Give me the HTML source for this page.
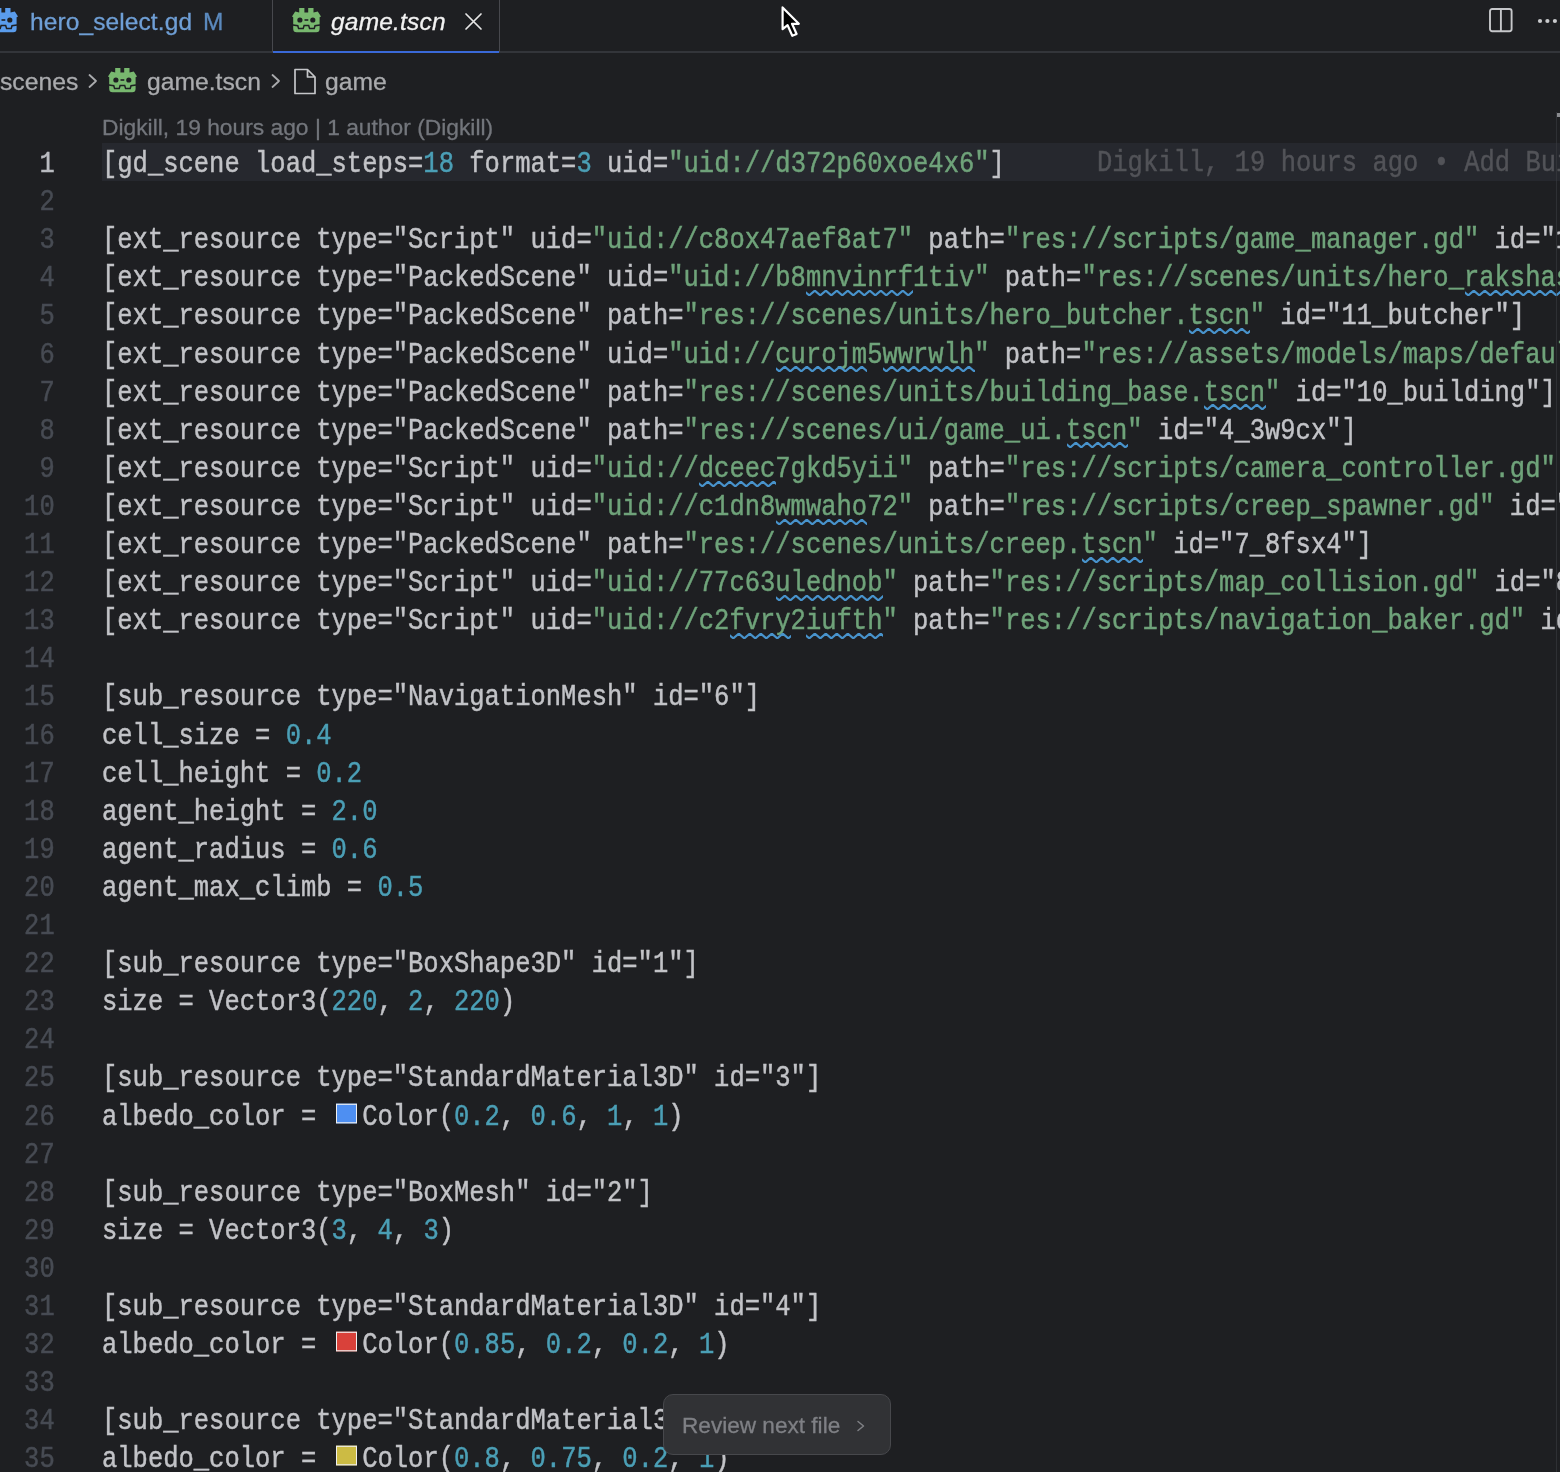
<!DOCTYPE html>
<html><head><meta charset="utf-8"><style>
*{margin:0;padding:0;box-sizing:border-box}
html,body{width:1560px;height:1472px;overflow:hidden;background:#1e1f22}
body{position:relative;font-family:"Liberation Sans",sans-serif}
.abs{position:absolute}
svg{display:block}
#tabs{position:absolute;left:0;top:50.8px;width:1560px;height:2px;background:#33353a}
.ui{position:absolute;white-space:pre;font-family:"Liberation Sans",sans-serif;line-height:1;will-change:transform;-webkit-text-stroke:0.3px currentColor}
.ln{position:absolute;left:0;width:54.70px;text-align:right;height:38.1px;line-height:38.1px;font-family:"Liberation Mono",monospace;font-size:25.518px;letter-spacing:0.000px;color:#474b53;transform:translateY(2.6px) scaleY(1.16);-webkit-text-stroke:0.4px currentColor;will-change:transform}
.ln.cur{color:#b9bbc0}
.code{position:absolute;left:101.5px;height:38.1px;line-height:38.1px;white-space:pre;font-family:"Liberation Mono",monospace;font-size:25.518px;letter-spacing:0.000px;color:#c2c3c7;transform:translateY(2.6px) scaleY(1.16);-webkit-text-stroke:0.4px currentColor;will-change:transform}
.code .s{color:#6fa37a}
.code .n{color:#4b9fb6}
.sw{display:inline-block;width:30.63px;height:10px;position:relative;vertical-align:baseline}
.sw b{position:absolute;left:4.7px;top:-8.0px;width:21px;height:17.4px;border:1.7px solid #f0f0f0}
.sq{position:absolute;overflow:hidden}
#clip{position:absolute;left:0;top:0;width:1560px;height:1472px;overflow:hidden}
</style></head><body>
<div id="tabs"></div>
<div class="abs" style="left:-11px;top:8px"><svg width="29" height="25" viewBox="0 0 29 25"><path fill="#5a9cec" d="M7.2 0 H12.4 V4.4 H16.2 V0 H21.5 V4.4 L25.8 3.5 L29 8.6 L27.6 9.3 V20.8 Q27.6 24.3 24.3 24.3 H4.5 Q1.2 24.3 1.2 20.8 V9.3 L0 8.6 L3.2 3.5 L7.2 4.4 Z"/>
<path d="M0.8 16.9 L5.8 17.7 L6.6 20.6 L11.2 20.6 L12.1 17.5 L16.7 17.5 L17.6 20.6 L22.2 20.6 L23 17.7 L28 16.9" fill="none" stroke="#1e1f22" stroke-width="1.5" stroke-linejoin="miter"/>
<g fill="#1e1f22"><circle cx="7.9" cy="12" r="2.6"/><circle cx="20.8" cy="12" r="2.6"/><rect x="12.5" y="11.2" width="3.8" height="1.6"/></g></svg></div>
<div class="ui" style="left:29.5px;top:10px;font-size:24.5px;letter-spacing:0.1px;color:#6f9fd6">hero_select.gd</div>
<div class="ui" style="left:202.5px;top:10px;font-size:24.5px;color:#5b89bd">M</div>
<div class="abs" style="left:272px;top:0;width:1px;height:52px;background:#47484d"></div>
<div class="abs" style="left:499px;top:0;width:1px;height:52px;background:#47484d"></div>
<div class="abs" style="left:273px;top:50.5px;width:226px;height:2.2px;background:#3a69d8"></div>
<div class="abs" style="left:291.6px;top:8px"><svg width="29" height="25" viewBox="0 0 29 25"><path fill="#78b86f" d="M7.2 0 H12.4 V4.4 H16.2 V0 H21.5 V4.4 L25.8 3.5 L29 8.6 L27.6 9.3 V20.8 Q27.6 24.3 24.3 24.3 H4.5 Q1.2 24.3 1.2 20.8 V9.3 L0 8.6 L3.2 3.5 L7.2 4.4 Z"/>
<path d="M0.8 16.9 L5.8 17.7 L6.6 20.6 L11.2 20.6 L12.1 17.5 L16.7 17.5 L17.6 20.6 L22.2 20.6 L23 17.7 L28 16.9" fill="none" stroke="#1e1f22" stroke-width="1.5" stroke-linejoin="miter"/>
<g fill="#1e1f22"><circle cx="7.9" cy="12" r="2.6"/><circle cx="20.8" cy="12" r="2.6"/><rect x="12.5" y="11.2" width="3.8" height="1.6"/></g></svg></div>
<div class="ui" style="left:331px;top:10px;font-size:24.5px;letter-spacing:0.2px;font-style:italic;color:#f2f2f2">game.tscn</div>
<svg class="abs" style="left:462.5px;top:10.5px" width="21" height="21" viewBox="0 0 21 21"><path d="M3 3 L18 18 M18 3 L3 18" stroke="#e6e6e6" stroke-width="1.7" stroke-linecap="round"/></svg>
<div class="abs" style="left:1489.2px;top:7.9px"><svg width="26" height="26" viewBox="0 0 26 26"><rect x="1" y="1" width="21.6" height="22.2" rx="2.2" fill="none" stroke="#c6c7ca" stroke-width="1.9"/><line x1="11.9" y1="1" x2="11.9" y2="23.2" stroke="#c6c7ca" stroke-width="1.9"/></svg></div>
<svg class="abs" style="left:1535px;top:16px" width="25" height="10" viewBox="0 0 25 10"><circle cx="5" cy="5" r="2.1" fill="#c9cacd"/><circle cx="12.4" cy="5" r="2.1" fill="#c9cacd"/><circle cx="19.9" cy="5" r="2.1" fill="#c9cacd"/></svg>
<div class="abs" style="left:776px;top:3px"><svg width="30" height="40" viewBox="0 0 30 40"><path d="M6.6 4.4 L6.6 26.2 L11.6 22.2 L16.3 32.8 L20.6 31 L16 20.8 L22.8 20.8 Z" fill="#000" stroke="#fff" stroke-width="2.2" stroke-linejoin="round"/></svg></div>

<div class="ui" style="left:0px;top:70.3px;font-size:24.7px;transform:scaleY(1.0);transform-origin:0 80%;color:#aaabae">scenes</div>
<div class="abs" style="left:87px;top:73px"><svg width="12" height="16" viewBox="0 0 12 16"><path d="M2.5 2 L9 8 L2.5 14" fill="none" stroke="#aaabae" stroke-width="1.8" stroke-linecap="round" stroke-linejoin="round"/></svg></div>
<div class="abs" style="left:107.7px;top:68px"><svg width="29" height="25" viewBox="0 0 29 25"><path fill="#78b86f" d="M7.2 0 H12.4 V4.4 H16.2 V0 H21.5 V4.4 L25.8 3.5 L29 8.6 L27.6 9.3 V20.8 Q27.6 24.3 24.3 24.3 H4.5 Q1.2 24.3 1.2 20.8 V9.3 L0 8.6 L3.2 3.5 L7.2 4.4 Z"/>
<path d="M0.8 16.9 L5.8 17.7 L6.6 20.6 L11.2 20.6 L12.1 17.5 L16.7 17.5 L17.6 20.6 L22.2 20.6 L23 17.7 L28 16.9" fill="none" stroke="#1e1f22" stroke-width="1.5" stroke-linejoin="miter"/>
<g fill="#1e1f22"><circle cx="7.9" cy="12" r="2.6"/><circle cx="20.8" cy="12" r="2.6"/><rect x="12.5" y="11.2" width="3.8" height="1.6"/></g></svg></div>
<div class="ui" style="left:147px;top:70.3px;font-size:24.7px;transform:scaleY(1.0);transform-origin:0 80%;color:#aaabae">game.tscn</div>
<div class="abs" style="left:270px;top:73px"><svg width="12" height="16" viewBox="0 0 12 16"><path d="M2.5 2 L9 8 L2.5 14" fill="none" stroke="#aaabae" stroke-width="1.8" stroke-linecap="round" stroke-linejoin="round"/></svg></div>
<div class="abs" style="left:292.5px;top:67.5px"><svg width="24" height="27" viewBox="0 0 24 27"><path d="M2 1.5 H14.5 L22 9 V25.5 H2 Z M14.5 1.5 V9 H22" fill="none" stroke="#c5c6c9" stroke-width="1.7" stroke-linejoin="round"/></svg></div>
<div class="ui" style="left:325px;top:70.3px;font-size:24.7px;transform:scaleY(1.0);transform-origin:0 80%;color:#aaabae">game</div>

<div class="ui" style="left:101.6px;top:116.2px;font-size:22.8px;color:#73767c">Digkill, 19 hours ago | 1 author (Digkill)</div>

<div class="abs" style="left:102px;top:143.0px;width:1460px;height:38.1px;background:#26282e"></div>
<div id="clip">
<div class="ln cur" style="top:143.00px">1</div>
<div class="code" style="top:143.00px">[gd_scene load_steps=<span class="n">18</span> format=<span class="n">3</span> uid=<span class="s">&quot;uid://d372p60xoe4x6&quot;</span>]</div>
<div class="ln" style="top:181.10px">2</div>
<div class="ln" style="top:219.20px">3</div>
<div class="code" style="top:219.20px">[ext_resource type=&quot;Script&quot; uid=<span class="s">&quot;uid://c8ox47aef8at7&quot;</span> path=<span class="s">&quot;res://scripts/game_manager.gd&quot;</span> id=&quot;1_abcde&quot;]</div>
<div class="ln" style="top:257.30px">4</div>
<div class="code" style="top:257.30px">[ext_resource type=&quot;PackedScene&quot; uid=<span class="s">&quot;uid://b8mnvinrf1tiv&quot;</span> path=<span class="s">&quot;res://scenes/units/hero_rakshasa.tscn&quot;</span> id=&quot;2_x&quot;]</div>
<svg class="sq" style="top:290.00px;left:806.20px" width="107.2" height="6" viewBox="0 0 107.2 6"><polyline points="-2.20,0.60 3.30,5.40 8.80,0.60 14.30,5.40 19.80,0.60 25.30,5.40 30.80,0.60 36.30,5.40 41.80,0.60 47.30,5.40 52.80,0.60 58.30,5.40 63.80,0.60 69.30,5.40 74.80,0.60 80.30,5.40 85.80,0.60 91.30,5.40 96.80,0.60 102.30,5.40 107.80,0.60 113.30,5.40" fill="none" stroke="#4893cc" stroke-width="2.1" stroke-linejoin="round" stroke-linecap="round"/></svg>
<svg class="sq" style="top:290.00px;left:1464.66px" width="122.5" height="6" viewBox="0 0 122.5 6"><polyline points="-2.20,0.60 3.30,5.40 8.80,0.60 14.30,5.40 19.80,0.60 25.30,5.40 30.80,0.60 36.30,5.40 41.80,0.60 47.30,5.40 52.80,0.60 58.30,5.40 63.80,0.60 69.30,5.40 74.80,0.60 80.30,5.40 85.80,0.60 91.30,5.40 96.80,0.60 102.30,5.40 107.80,0.60 113.30,5.40 118.80,0.60 124.30,5.40 129.80,0.60" fill="none" stroke="#4893cc" stroke-width="2.1" stroke-linejoin="round" stroke-linecap="round"/></svg>
<div class="ln" style="top:295.40px">5</div>
<div class="code" style="top:295.40px">[ext_resource type=&quot;PackedScene&quot; path=<span class="s">&quot;res://scenes/units/hero_butcher.tscn&quot;</span> id=&quot;11_butcher&quot;]</div>
<svg class="sq" style="top:328.10px;left:1189.02px" width="61.3" height="6" viewBox="0 0 61.3 6"><polyline points="-2.20,0.60 3.30,5.40 8.80,0.60 14.30,5.40 19.80,0.60 25.30,5.40 30.80,0.60 36.30,5.40 41.80,0.60 47.30,5.40 52.80,0.60 58.30,5.40 63.80,0.60 69.30,5.40" fill="none" stroke="#4893cc" stroke-width="2.1" stroke-linejoin="round" stroke-linecap="round"/></svg>
<div class="ln" style="top:333.50px">6</div>
<div class="code" style="top:333.50px">[ext_resource type=&quot;PackedScene&quot; uid=<span class="s">&quot;uid://curojm5wwrwlh&quot;</span> path=<span class="s">&quot;res://assets/models/maps/default.glb&quot;</span> id=&quot;3_x&quot;]</div>
<svg class="sq" style="top:366.20px;left:775.57px" width="91.9" height="6" viewBox="0 0 91.9 6"><polyline points="-2.20,0.60 3.30,5.40 8.80,0.60 14.30,5.40 19.80,0.60 25.30,5.40 30.80,0.60 36.30,5.40 41.80,0.60 47.30,5.40 52.80,0.60 58.30,5.40 63.80,0.60 69.30,5.40 74.80,0.60 80.30,5.40 85.80,0.60 91.30,5.40 96.80,0.60" fill="none" stroke="#4893cc" stroke-width="2.1" stroke-linejoin="round" stroke-linecap="round"/></svg>
<svg class="sq" style="top:366.20px;left:882.76px" width="91.9" height="6" viewBox="0 0 91.9 6"><polyline points="-2.20,0.60 3.30,5.40 8.80,0.60 14.30,5.40 19.80,0.60 25.30,5.40 30.80,0.60 36.30,5.40 41.80,0.60 47.30,5.40 52.80,0.60 58.30,5.40 63.80,0.60 69.30,5.40 74.80,0.60 80.30,5.40 85.80,0.60 91.30,5.40 96.80,0.60" fill="none" stroke="#4893cc" stroke-width="2.1" stroke-linejoin="round" stroke-linecap="round"/></svg>
<div class="ln" style="top:371.60px">7</div>
<div class="code" style="top:371.60px">[ext_resource type=&quot;PackedScene&quot; path=<span class="s">&quot;res://scenes/units/building_base.tscn&quot;</span> id=&quot;10_building&quot;]</div>
<svg class="sq" style="top:404.30px;left:1204.34px" width="61.3" height="6" viewBox="0 0 61.3 6"><polyline points="-2.20,0.60 3.30,5.40 8.80,0.60 14.30,5.40 19.80,0.60 25.30,5.40 30.80,0.60 36.30,5.40 41.80,0.60 47.30,5.40 52.80,0.60 58.30,5.40 63.80,0.60 69.30,5.40" fill="none" stroke="#4893cc" stroke-width="2.1" stroke-linejoin="round" stroke-linecap="round"/></svg>
<div class="ln" style="top:409.70px">8</div>
<div class="code" style="top:409.70px">[ext_resource type=&quot;PackedScene&quot; path=<span class="s">&quot;res://scenes/ui/game_ui.tscn&quot;</span> id=&quot;4_3w9cx&quot;]</div>
<svg class="sq" style="top:442.40px;left:1066.52px" width="61.3" height="6" viewBox="0 0 61.3 6"><polyline points="-2.20,0.60 3.30,5.40 8.80,0.60 14.30,5.40 19.80,0.60 25.30,5.40 30.80,0.60 36.30,5.40 41.80,0.60 47.30,5.40 52.80,0.60 58.30,5.40 63.80,0.60 69.30,5.40" fill="none" stroke="#4893cc" stroke-width="2.1" stroke-linejoin="round" stroke-linecap="round"/></svg>
<div class="ln" style="top:447.80px">9</div>
<div class="code" style="top:447.80px">[ext_resource type=&quot;Script&quot; uid=<span class="s">&quot;uid://dceec7gkd5yii&quot;</span> path=<span class="s">&quot;res://scripts/camera_controller.gd&quot;</span> id=&quot;5_x&quot;]</div>
<svg class="sq" style="top:480.50px;left:699.01px" width="76.6" height="6" viewBox="0 0 76.6 6"><polyline points="-2.20,0.60 3.30,5.40 8.80,0.60 14.30,5.40 19.80,0.60 25.30,5.40 30.80,0.60 36.30,5.40 41.80,0.60 47.30,5.40 52.80,0.60 58.30,5.40 63.80,0.60 69.30,5.40 74.80,0.60 80.30,5.40" fill="none" stroke="#4893cc" stroke-width="2.1" stroke-linejoin="round" stroke-linecap="round"/></svg>
<div class="ln" style="top:485.90px">10</div>
<div class="code" style="top:485.90px">[ext_resource type=&quot;Script&quot; uid=<span class="s">&quot;uid://c1dn8wmwaho72&quot;</span> path=<span class="s">&quot;res://scripts/creep_spawner.gd&quot;</span> id=&quot;6_x&quot;]</div>
<svg class="sq" style="top:518.60px;left:775.57px" width="91.9" height="6" viewBox="0 0 91.9 6"><polyline points="-2.20,0.60 3.30,5.40 8.80,0.60 14.30,5.40 19.80,0.60 25.30,5.40 30.80,0.60 36.30,5.40 41.80,0.60 47.30,5.40 52.80,0.60 58.30,5.40 63.80,0.60 69.30,5.40 74.80,0.60 80.30,5.40 85.80,0.60 91.30,5.40 96.80,0.60" fill="none" stroke="#4893cc" stroke-width="2.1" stroke-linejoin="round" stroke-linecap="round"/></svg>
<div class="ln" style="top:524.00px">11</div>
<div class="code" style="top:524.00px">[ext_resource type=&quot;PackedScene&quot; path=<span class="s">&quot;res://scenes/units/creep.tscn&quot;</span> id=&quot;7_8fsx4&quot;]</div>
<svg class="sq" style="top:556.70px;left:1081.83px" width="61.3" height="6" viewBox="0 0 61.3 6"><polyline points="-2.20,0.60 3.30,5.40 8.80,0.60 14.30,5.40 19.80,0.60 25.30,5.40 30.80,0.60 36.30,5.40 41.80,0.60 47.30,5.40 52.80,0.60 58.30,5.40 63.80,0.60 69.30,5.40" fill="none" stroke="#4893cc" stroke-width="2.1" stroke-linejoin="round" stroke-linecap="round"/></svg>
<div class="ln" style="top:562.10px">12</div>
<div class="code" style="top:562.10px">[ext_resource type=&quot;Script&quot; uid=<span class="s">&quot;uid://77c63ulednob&quot;</span> path=<span class="s">&quot;res://scripts/map_collision.gd&quot;</span> id=&quot;8_x&quot;]</div>
<svg class="sq" style="top:594.80px;left:775.57px" width="107.2" height="6" viewBox="0 0 107.2 6"><polyline points="-2.20,0.60 3.30,5.40 8.80,0.60 14.30,5.40 19.80,0.60 25.30,5.40 30.80,0.60 36.30,5.40 41.80,0.60 47.30,5.40 52.80,0.60 58.30,5.40 63.80,0.60 69.30,5.40 74.80,0.60 80.30,5.40 85.80,0.60 91.30,5.40 96.80,0.60 102.30,5.40 107.80,0.60 113.30,5.40" fill="none" stroke="#4893cc" stroke-width="2.1" stroke-linejoin="round" stroke-linecap="round"/></svg>
<div class="ln" style="top:600.20px">13</div>
<div class="code" style="top:600.20px">[ext_resource type=&quot;Script&quot; uid=<span class="s">&quot;uid://c2fvry2iufth&quot;</span> path=<span class="s">&quot;res://scripts/navigation_baker.gd&quot;</span> id=&quot;9_x&quot;]</div>
<svg class="sq" style="top:632.90px;left:729.63px" width="61.3" height="6" viewBox="0 0 61.3 6"><polyline points="-2.20,0.60 3.30,5.40 8.80,0.60 14.30,5.40 19.80,0.60 25.30,5.40 30.80,0.60 36.30,5.40 41.80,0.60 47.30,5.40 52.80,0.60 58.30,5.40 63.80,0.60 69.30,5.40" fill="none" stroke="#4893cc" stroke-width="2.1" stroke-linejoin="round" stroke-linecap="round"/></svg>
<svg class="sq" style="top:632.90px;left:806.20px" width="76.6" height="6" viewBox="0 0 76.6 6"><polyline points="-2.20,0.60 3.30,5.40 8.80,0.60 14.30,5.40 19.80,0.60 25.30,5.40 30.80,0.60 36.30,5.40 41.80,0.60 47.30,5.40 52.80,0.60 58.30,5.40 63.80,0.60 69.30,5.40 74.80,0.60 80.30,5.40" fill="none" stroke="#4893cc" stroke-width="2.1" stroke-linejoin="round" stroke-linecap="round"/></svg>
<div class="ln" style="top:638.30px">14</div>
<div class="ln" style="top:676.40px">15</div>
<div class="code" style="top:676.40px">[sub_resource type=&quot;NavigationMesh&quot; id=&quot;6&quot;]</div>
<div class="ln" style="top:714.50px">16</div>
<div class="code" style="top:714.50px">cell_size = <span class="n">0.4</span></div>
<div class="ln" style="top:752.60px">17</div>
<div class="code" style="top:752.60px">cell_height = <span class="n">0.2</span></div>
<div class="ln" style="top:790.70px">18</div>
<div class="code" style="top:790.70px">agent_height = <span class="n">2.0</span></div>
<div class="ln" style="top:828.80px">19</div>
<div class="code" style="top:828.80px">agent_radius = <span class="n">0.6</span></div>
<div class="ln" style="top:866.90px">20</div>
<div class="code" style="top:866.90px">agent_max_climb = <span class="n">0.5</span></div>
<div class="ln" style="top:905.00px">21</div>
<div class="ln" style="top:943.10px">22</div>
<div class="code" style="top:943.10px">[sub_resource type=&quot;BoxShape3D&quot; id=&quot;1&quot;]</div>
<div class="ln" style="top:981.20px">23</div>
<div class="code" style="top:981.20px">size = Vector3(<span class="n">220</span>, <span class="n">2</span>, <span class="n">220</span>)</div>
<div class="ln" style="top:1019.30px">24</div>
<div class="ln" style="top:1057.40px">25</div>
<div class="code" style="top:1057.40px">[sub_resource type=&quot;StandardMaterial3D&quot; id=&quot;3&quot;]</div>
<div class="ln" style="top:1095.50px">26</div>
<div class="code" style="top:1095.50px">albedo_color = <i class="sw"><b style="background:#4e8ff2"></b></i>Color(<span class="n">0.2</span>, <span class="n">0.6</span>, <span class="n">1</span>, <span class="n">1</span>)</div>
<div class="ln" style="top:1133.60px">27</div>
<div class="ln" style="top:1171.70px">28</div>
<div class="code" style="top:1171.70px">[sub_resource type=&quot;BoxMesh&quot; id=&quot;2&quot;]</div>
<div class="ln" style="top:1209.80px">29</div>
<div class="code" style="top:1209.80px">size = Vector3(<span class="n">3</span>, <span class="n">4</span>, <span class="n">3</span>)</div>
<div class="ln" style="top:1247.90px">30</div>
<div class="ln" style="top:1286.00px">31</div>
<div class="code" style="top:1286.00px">[sub_resource type=&quot;StandardMaterial3D&quot; id=&quot;4&quot;]</div>
<div class="ln" style="top:1324.10px">32</div>
<div class="code" style="top:1324.10px">albedo_color = <i class="sw"><b style="background:#d9413a"></b></i>Color(<span class="n">0.85</span>, <span class="n">0.2</span>, <span class="n">0.2</span>, <span class="n">1</span>)</div>
<div class="ln" style="top:1362.20px">33</div>
<div class="ln" style="top:1400.30px">34</div>
<div class="code" style="top:1400.30px">[sub_resource type=&quot;StandardMaterial3D&quot; id=&quot;5&quot;]</div>
<div class="ln" style="top:1438.40px">35</div>
<div class="code" style="top:1438.40px">albedo_color = <i class="sw"><b style="background:#ccbb44"></b></i>Color(<span class="n">0.8</span>, <span class="n">0.75</span>, <span class="n">0.2</span>, <span class="n">1</span>)</div>
<div class="code" style="top:141.80px;left:1096.85px;color:#525358">Digkill, 19 hours ago • Add Building and stuff</div>
</div>
<div class="abs" style="left:1556px;top:112px;width:1px;height:1360px;background:rgba(60,62,68,0.55)"></div>
<div class="abs" style="left:1557px;top:113px;width:3px;height:4px;background:#8a8b8f"></div>

<div class="abs" style="left:662.5px;top:1394px;width:228.5px;height:61px;border-radius:10px;background:#313235;border:1px solid #47484c"></div>
<div class="ui" style="left:682px;top:1415px;font-size:22.6px;color:#7f8085">Review next file</div>
<svg class="abs" style="left:855px;top:1419px" width="12" height="14" viewBox="0 0 12 14"><path d="M3 2.5 L8.5 7 L3 11.5" fill="none" stroke="#7f8085" stroke-width="1.5" stroke-linecap="round" stroke-linejoin="round"/></svg>
</body></html>
